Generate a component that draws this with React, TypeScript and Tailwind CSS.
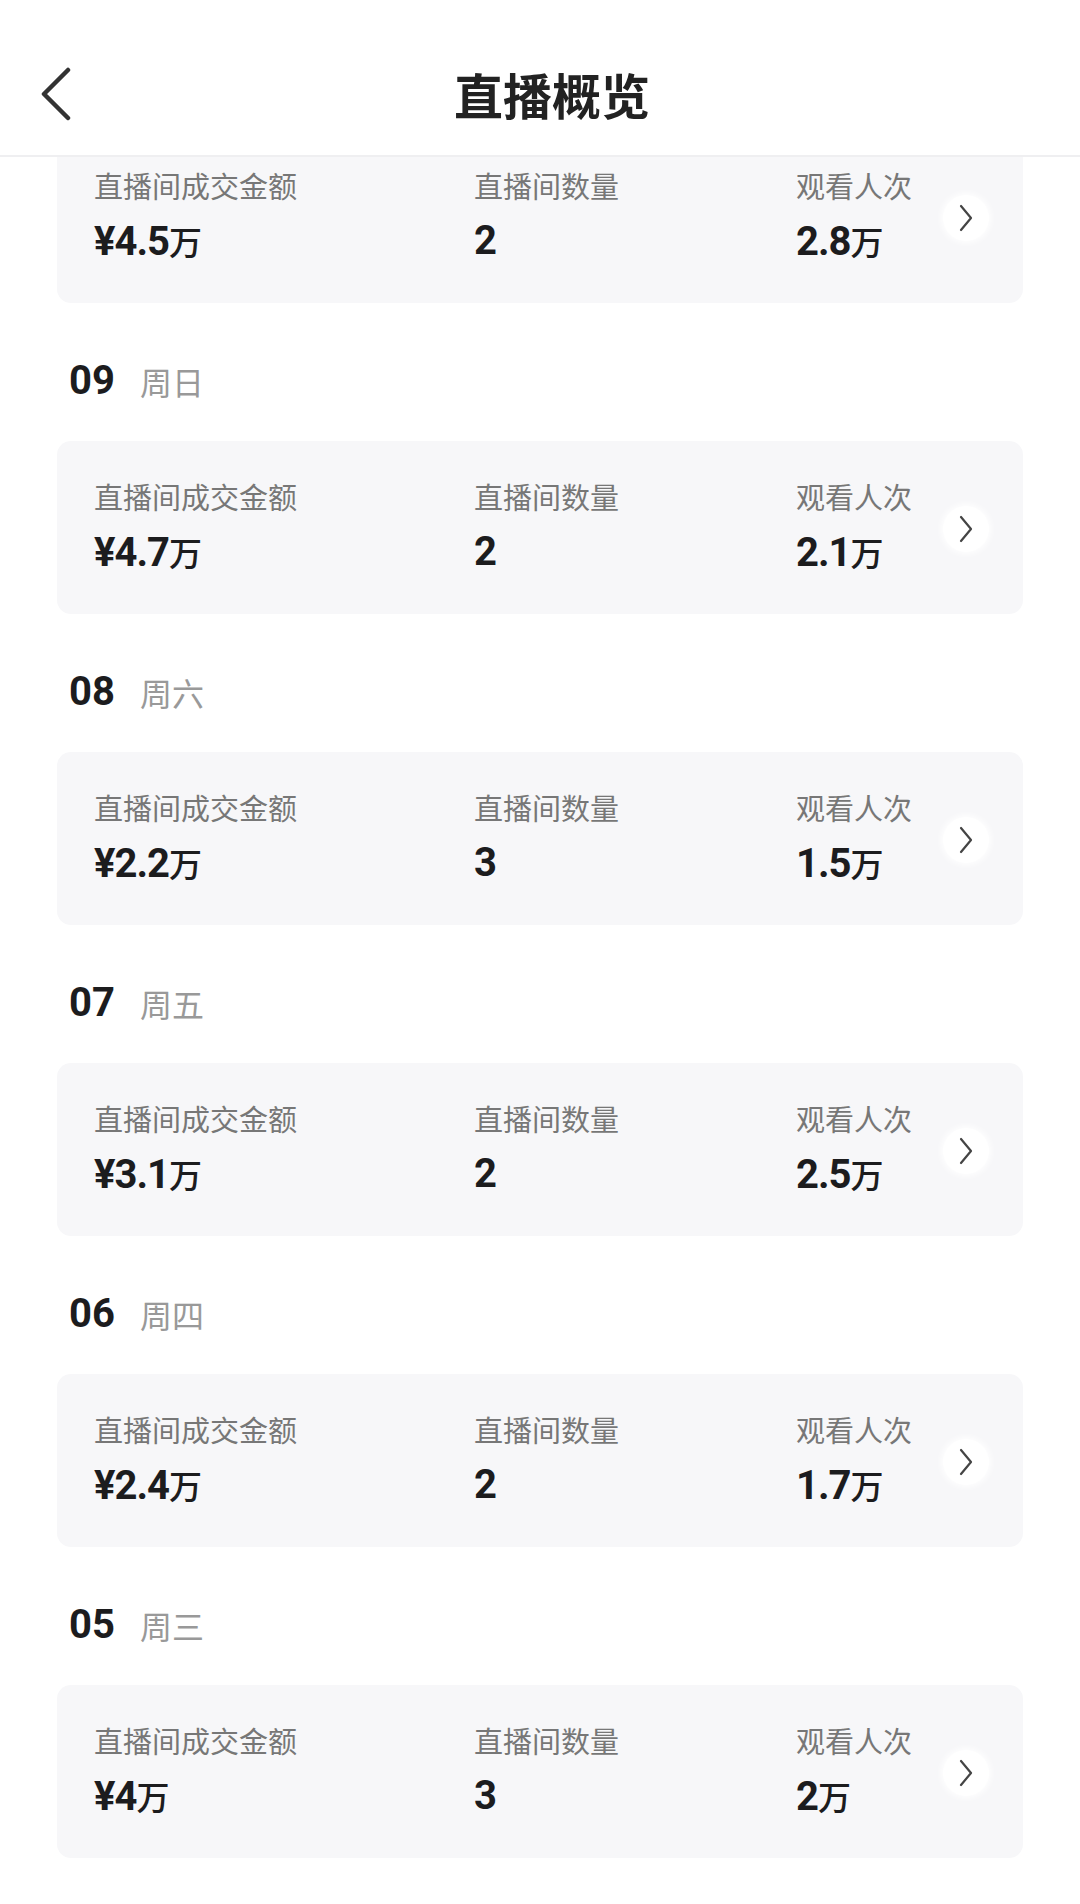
import React from "react";

type Day = { day?: string; week?: string; amount: string; rooms: string; views: string };

const days: Day[] = [
  { amount: "4.5", rooms: "2", views: "2.8" },
  { day: "09", week: "周日", amount: "4.7", rooms: "2", views: "2.1" },
  { day: "08", week: "周六", amount: "2.2", rooms: "3", views: "1.5" },
  { day: "07", week: "周五", amount: "3.1", rooms: "2", views: "2.5" },
  { day: "06", week: "周四", amount: "2.4", rooms: "2", views: "1.7" },
  { day: "05", week: "周三", amount: "4", rooms: "3", views: "2" },
];

const cjk = { fontFamily: '"Noto Sans CJK SC", "Noto Sans", sans-serif' };
const num = { fontFamily: 'Roboto, "Noto Sans CJK SC", sans-serif' };

function Metric({ label, value, unit, yen }: { label: string; value: string; unit?: boolean; yen?: boolean }) {
  return (
    <div className="flex flex-col gap-[12px]">
      <div className="text-[29px] leading-[40px] text-[#777]" style={cjk}>
        {label}
      </div>
      <div className="h-[48px] flex items-baseline text-[#1c1c1e]">
        <span className="text-[40px] leading-[48px] font-bold tracking-[-1px]" style={num}>
          {yen ? "¥" : ""}
          {value}
        </span>
        {unit ? (
          <span className="text-[33px] leading-[48px] font-medium" style={cjk}>
            万
          </span>
        ) : null}
      </div>
    </div>
  );
}

function Card({ d, first }: { d: Day; first?: boolean }) {
  return (
    <div
      className={`mx-[57px] rounded-[14px] bg-[#f7f7f9] h-[173px] pt-[35px] pl-[37px] pr-[34px] flex items-start ${
        first ? "mt-[-27px]" : ""
      }`}
    >
      <div className="w-[380px]">
        <Metric label="直播间成交金额" value={d.amount} unit yen />
      </div>
      <div className="w-[322px]">
        <Metric label="直播间数量" value={d.rooms} />
      </div>
      <div className="flex-1">
        <Metric label="观看人次" value={d.views} unit />
      </div>
      <div className="self-start mt-[30px] w-[46px] h-[46px] rounded-full bg-white flex items-center justify-center shadow-[0_0_6px_2px_rgba(255,255,255,0.9)]">
        <svg width="16" height="30" viewBox="0 0 16 30" fill="none">
          <path d="M3 3 L13 15 L3 27" stroke="#444" strokeWidth="2.2" strokeLinecap="round" strokeLinejoin="round" />
        </svg>
      </div>
    </div>
  );
}

export default function App() {
  return (
    <div className="w-[1080px] h-[1904px] bg-white overflow-hidden relative">
      <div className="relative z-10 h-[157px] bg-white border-b-2 border-[#efeff1] flex items-center justify-center">
        <div className="absolute left-[38px] top-[67px]">
          <svg width="36" height="54" viewBox="0 0 36 54" fill="none">
            <path d="M30 3 L6 27 L30 51" stroke="#333" strokeWidth="4.5" strokeLinecap="round" strokeLinejoin="round" />
          </svg>
        </div>
        <div className="ml-[24px] mt-[31px] text-[49px] font-bold text-[#222] leading-none" style={cjk}>
          直播概览
        </div>
      </div>
      <div className="relative z-0">
        {days.map((d, i) => (
          <div key={i}>
            {d.day ? (
              <div className="h-[138px] pt-[56px] pl-[69px] flex items-start">
                <div className="h-[44px] flex items-center gap-[25px]">
                  <span className="text-[40px] font-bold text-[#1c1c1e] leading-none" style={num}>
                    {d.day}
                  </span>
                  <span className="text-[32px] text-[#999] leading-none" style={cjk}>
                    {d.week}
                  </span>
                </div>
              </div>
            ) : null}
            <Card d={d} first={i === 0} />
          </div>
        ))}
      </div>
    </div>
  );
}
